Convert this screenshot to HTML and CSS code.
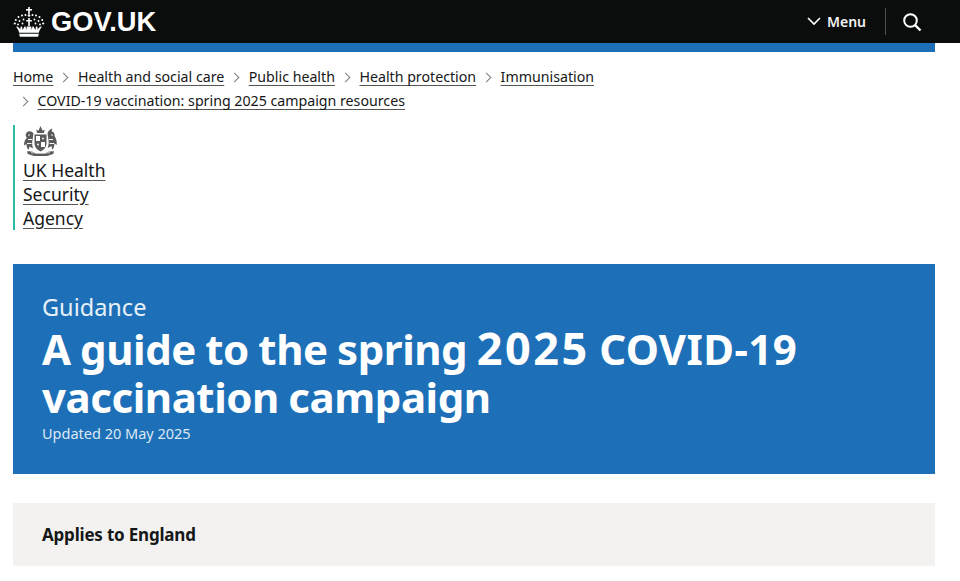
FILE: index.html
```html
<!DOCTYPE html>
<html lang="en">

<head>
    <meta charset="UTF-8">
    <meta name="viewport" content="width=device-width, initial-scale=1.0">
    <title>A guide to the spring 2025 COVID-19 vaccination campaign</title>
    <link rel="stylesheet" href="styles.css">
</head>

<body>
    <header class="site-header">
        <a href="#" class="logo">
            <svg class="crown" viewBox="0 0 32 30" width="32" height="30" aria-hidden="true">
                <g fill="#fff">
                    <rect x="15.200" y="0" width="1.600" height="7"/>
                    <rect x="13" y="2" width="6" height="1.600"/>
                    <circle cx="16" cy="8.500" r="1.300"/>
                    <circle cx="12.500" cy="8" r="1"/>
                    <circle cx="19.500" cy="8" r="1"/>
                    <circle cx="9" cy="8.500" r="1"/>
                    <circle cx="23" cy="8.500" r="1"/>
                    <circle cx="5.500" cy="10" r="1"/>
                    <circle cx="26.500" cy="10" r="1"/>
                    <circle cx="2.800" cy="13" r="1"/>
                    <circle cx="29.200" cy="13" r="1"/>
                    <circle cx="1.800" cy="16.500" r="1.100"/>
                    <circle cx="30.200" cy="16.500" r="1.100"/>
                    <circle cx="6.500" cy="14" r=".9"/>
                    <circle cx="25.500" cy="14" r=".9"/>
                    <circle cx="10.500" cy="12.500" r=".9"/>
                    <circle cx="21.500" cy="12.500" r=".9"/>
                    <circle cx="5" cy="17.500" r=".9"/>
                    <circle cx="27" cy="17.500" r=".9"/>
                    <circle cx="9.500" cy="16.500" r=".9"/>
                    <circle cx="22.500" cy="16.500" r=".9"/>
                    <rect x="15.200" y="11" width="1.600" height="8"/>
                    <rect x="13.200" y="13" width="5.600" height="1.500"/>
                    <path d="M3 19.500c2.500.2 3.600 1.500 4.200 3.200l.5-3.200h1.300l.7 3.500 1.700-3.500h1.200l.6 3.500.6-3.500h4.400l.6 3.500.6-3.500h1.200l1.700 3.500.7-3.500h1.300l.5 3.200c.6-1.700 1.700-3 4.200-3.200-1.500 2-2.600 4-3.200 6.200H6.200C5.600 23.500 4.500 21.500 3 19.500z"/>
                    <path d="M6.200 26.700h19.600l-.6 3H6.800z"/>
                </g>
            </svg>
            <span class="logo-text">GOV.UK</span>
        </a>
        <nav class="header-nav">
            <a href="#" class="menu-btn">
                <svg viewBox="0 0 14 9" width="14" height="9" aria-hidden="true">
                    <path d="M1 1l6 6 6-6" fill="none" stroke="#fff" stroke-width="1.600"/>
                </svg>
                Menu
            </a>
            <span class="nav-divider"></span>
            <a href="#" class="search-btn" aria-label="Search">
                <svg viewBox="0 0 20 20" width="20" height="20" aria-hidden="true">
                    <circle cx="8.500" cy="8.500" r="6.300" fill="none" stroke="#fff" stroke-width="2"/>
                    <path d="M13 13l5.500 5.500" stroke="#fff" stroke-width="2.400"/>
                </svg>
            </a>
        </nav>
    </header>

    <div class="page">
        <div class="blue-bar"></div>

        <ol class="breadcrumbs">
            <li><a href="#">Home</a></li>
            <li><a href="#">Health and social care</a></li>
            <li><a href="#">Public health</a></li>
            <li><a href="#">Health protection</a></li>
            <li><a href="#">Immunisation</a></li>
            <li class="crumb-wide"><a href="#">COVID-19 vaccination: spring 2025 campaign resources</a></li>
        </ol>

        <div class="org-logo">
            <svg class="crest" viewBox="0 0 35 31" width="35" height="31" aria-hidden="true">
                <!-- royal arms, drawn roughly: crown, shield, lion, unicorn, motto -->
                <g fill="#5a5a5a">
                    <path d="M14 8l-.6-3.500 2 1.200L17.500 1l2.100 4.700 2-1.200L21 8z"/>
                    <path d="M11.500 9.500h12v8.500c0 4-2.500 7-6 8.500-3.500-1.500-6-4.500-6-8.500z"/>
                    <path d="M10.500 8.500c-1.500-2.500-5-3-6.800-1-1.600 1.800-1.200 4 .3 5.300-2 1.800-3.300 4.600-2.800 7.700l2.300-1.500c-.2 2.500.6 4.500 2.300 5.800l.6-3.300 3.700 2c-1-3-1.200-5.500-.7-8z"/>
                    <path d="M24.500 8.500c.5-2.500 2.500-4.500 5-5-.6 1.400-.8 2.300-.6 3.100 1.900.5 3.100 2.300 2.700 4.400 1.500 2.500 2.700 5.500 2 9l-2.300-1.800c.3 2.700-.5 5-2.200 6.300l-.6-3.500-3.800 2c1-3 1.300-5.500.8-8z"/>
                    <path d="M4 26.500c3.500-.5 6.500.5 9 2h9c2.500-1.500 5.500-2.500 9-2l-.8 2.500-6.200 2H11l-6.200-2z"/>
                </g>
                <g fill="#fff">
                    <rect x="13" y="11" width="4" height="5"/>
                    <rect x="18" y="17" width="4" height="5"/>
                    <circle cx="6" cy="10" r=".8"/>
                    <circle cx="29" cy="10" r=".8"/>
                    <path d="M5 14h4v1H5zM26 14h4v1h-4zM4 18h4.500v1H4zM26.500 18H31v1h-4.500zM8 27.500h19v.8H8z"/>
                    <circle cx="15" cy="19.500" r=".9"/>
                    <circle cx="20" cy="13.500" r=".9"/>
                </g>
            </svg>
            <a href="#" class="org-name">UK Health<br>Security<br>Agency</a>
        </div>

        <section class="hero">
            <p class="hero-type">Guidance</p>
            <h1>A guide to the spring <span class="h1-year">2025</span> <span class="h1-code">COVID-19</span> vaccination campaign</h1>
            <p class="hero-date">Updated 20 May 2025</p>
        </section>

        <div class="applies">
            <strong>Applies to England</strong>
        </div>
    </div>
</body>

</html>
```

FILE: styles.css
```css
html,
body {
    margin: 0;
    padding: 0;
    height: 581px;
    overflow: hidden;
}

body {
    font-family: "Noto Sans", Arial, sans-serif;
    background-color: #fff;
    color: #161717;
}

a {
    color: inherit;
}

.site-header {
    background-color: #0b0c0c;
    color: white;
    height: 43px;
    display: flex;
    align-items: center;
    justify-content: space-between;
    padding: 0 38px 0 13px;
}

.logo {
    display: flex;
    align-items: center;
    gap: 6px;
    text-decoration: none;
}

.logo-text {
    font-family: "Liberation Sans", Arial, sans-serif;
    font-weight: 700;
    font-size: 27.300px;
}

.header-nav {
    display: flex;
    align-items: center;
}

.menu-btn {
    display: flex;
    align-items: center;
    gap: 6px;
    font-size: 14px;
    font-weight: 600;
    text-decoration: none;
    color: #f2f2f2;
}

.nav-divider {
    width: 1px;
    height: 27px;
    background: #4f4f4f;
    margin: 0 16px 0 19px;
}

.search-btn {
    display: flex;
}

.page {
    padding: 0 25px 0 13px;
}

.blue-bar {
    height: 9px;
    background-color: #1d70b8;
}

.breadcrumbs {
    list-style: none;
    margin: 13px 0 0;
    padding: 0;
    display: flex;
    flex-wrap: wrap;
    font-size: 14.200px;
    line-height: 24px;
}

.breadcrumbs li {
    display: flex;
    align-items: center;
}

.breadcrumbs li + li::before {
    content: "";
    width: 6px;
    height: 6px;
    border-top: 1px solid #7b7c7e;
    border-right: 1px solid #7b7c7e;
    transform: rotate(45deg);
    margin: 0 10.500px 0 7px;
}

.crumb-wide {
    flex-basis: 100%;
}

.breadcrumbs a {
    text-underline-offset: 3px;
    text-decoration-color: #555;
}

.org-logo {
    margin-top: 12px;
    border-left: 2.500px solid #2bbba4;
    padding-left: 8px;
    height: 105px;
}

.crest {
    display: block;
}

.org-name {
    display: block;
    font-size: 17.500px;
    line-height: 24px;
    margin-top: 2px;
    text-underline-offset: 3px;
    text-decoration-color: #555;
}

.hero {
    margin-top: 34px;
    height: 210px;
    box-sizing: border-box;
    padding: 28px 29px 0;
    background-color: #1d70b8;
    color: #fff;
}

.hero-type {
    margin: 0;
    font-size: 23.500px;
    line-height: 30px;
    color: #e8f0f7;
}

.hero h1 {
    margin: 2px 0 0;
    font-size: 42px;
    line-height: 48px;
    font-weight: 700;
    letter-spacing: -0.450px;
    word-spacing: -1px;
    max-width: 800px;
}

/* the digits run wider in the original type */
.h1-year {
    display: inline-block;
    font-size: 45px;
    letter-spacing: 2.500px;
}

.h1-code {
    display: inline-block;
    letter-spacing: 0.400px;
}

.hero-date {
    margin: 2px 0 0;
    font-size: 14.500px;
    line-height: 20px;
    color: #dce8f3;
}

.applies {
    margin-top: 29px;
    height: 63px;
    display: flex;
    align-items: center;
    padding: 0 29px;
    background-color: #f3f2f1;
    font-size: 17px;
    letter-spacing: -0.200px;
}

.applies strong {
    font-weight: 700;
}
```
